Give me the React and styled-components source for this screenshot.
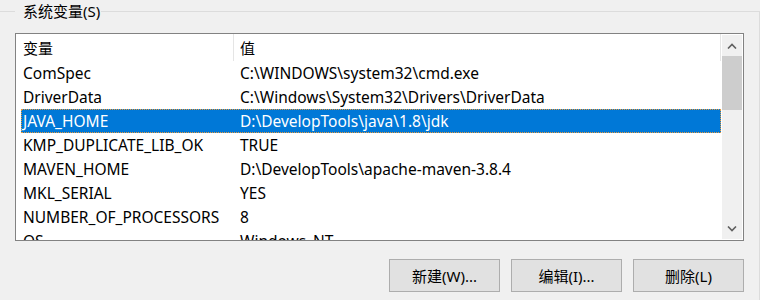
import styled, { createGlobalStyle } from "styled-components";

const GlobalStyle = createGlobalStyle`
  html, body {
    margin: 0;
    padding: 0;
    background: #f0f0f0;
  }
  body {
    font-family: "Noto Sans", "Noto Sans CJK SC", sans-serif;
    font-size: 15px;
    color: #000;
  }
`;

const vars = [
  ["ComSpec", "C:\\WINDOWS\\system32\\cmd.exe"],
  ["DriverData", "C:\\Windows\\System32\\Drivers\\DriverData"],
  ["JAVA_HOME", "D:\\DevelopTools\\java\\1.8\\jdk"],
  ["KMP_DUPLICATE_LIB_OK", "TRUE"],
  ["MAVEN_HOME", "D:\\DevelopTools\\apache-maven-3.8.4"],
  ["MKL_SERIAL", "YES"],
  ["NUMBER_OF_PROCESSORS", "8"],
  ["OS", "Windows_NT"],
];

const Page = styled.div`
  width: 760px;
  height: 300px;
  overflow: hidden;
`;

const Group = styled.fieldset`
  box-sizing: border-box;
  width: 760px;
  height: 311px;
  margin: 0;
  padding: 0 15px;
  border: none;
  border-top: 1px solid #dcdcdc;
  border-right: 1px solid #dcdcdc;
`;

const Legend = styled.legend`
  padding: 0 1px 0 8px;
  line-height: 23px;
  color: #000;
`;

const ListBox = styled.div`
  display: flex;
  height: 206px;
  margin-top: 10px;
  border: 1px solid #828282;
  background: #fff;
`;

const ListArea = styled.div`
  width: 705px;
  overflow: hidden;
  font-size: 15.5px;
`;

const Header = styled.div`
  display: flex;
  height: 27px;
  align-items: center;
  border-right: 1px solid #e5e5e5;
  font-size: 15px;
`;

const HeadCell = styled.div`
  box-sizing: border-box;
  height: 100%;
  display: flex;
  align-items: center;
  padding-left: ${(p) => p.$pad}px;
  width: ${(p) => (p.$w ? `${p.$w}px` : "auto")};
  flex: ${(p) => (p.$w ? "none" : "1")};
  border-right: ${(p) => (p.$w ? "1px solid #e5e5e5" : "none")};
`;

const Row = styled.div`
  box-sizing: border-box;
  display: flex;
  align-items: center;
  height: 24px;
  margin-left: 5px;
  white-space: nowrap;
  background: ${(p) => (p.$selected ? "#0078d7" : "transparent")};
  color: ${(p) => (p.$selected ? "#fff" : "#000")};
  border: 1px dotted ${(p) => (p.$selected ? "#e89a3c" : "transparent")};
`;

const NameCell = styled.div`
  width: 211px;
  padding-left: 1px;
`;

const ValueCell = styled.div`
  padding-left: 6px;
`;

const ScrollBar = styled.div`
  display: flex;
  flex-direction: column;
  width: 20px;
  margin: 1px 0 1px 1px;
  background: #f0f0f0;
`;

const ArrowBtn = styled.div`
  height: 21px;
  display: flex;
  align-items: center;
  justify-content: center;
`;

const Track = styled.div`
  flex: 1;
`;

const Thumb = styled.div`
  height: 54px;
  background: #cdcdcd;
`;

const Buttons = styled.div`
  display: flex;
  justify-content: flex-end;
  gap: 11px;
  margin-top: 18px;
`;

const Button = styled.button`
  box-sizing: border-box;
  width: 111px;
  height: 33px;
  padding: 0;
  border: 1px solid #adadad;
  background: #e1e1e1;
  font-family: inherit;
  font-size: 15px;
  color: #000;
`;

function Chevron({ up }) {
  return (
    <svg width="10" height="6" viewBox="0 0 10 6">
      <polyline
        points={up ? "1,5.5 5,1.5 9,5.5" : "1,0.5 5,4.5 9,0.5"}
        fill="none"
        stroke="#606060"
        strokeWidth="1.6"
      />
    </svg>
  );
}

export default function App() {
  return (
    <Page>
      <GlobalStyle />
      <Group>
        <Legend>系统变量(S)</Legend>
        <ListBox>
          <ListArea>
            <Header>
              <HeadCell $w={218} $pad={7}>变量</HeadCell>
              <HeadCell $pad={6}>值</HeadCell>
            </Header>
            {vars.map(([name, value]) => (
              <Row key={name} $selected={name === "JAVA_HOME"}>
                <NameCell>{name}</NameCell>
                <ValueCell>{value}</ValueCell>
              </Row>
            ))}
          </ListArea>
          <ScrollBar>
            <ArrowBtn><Chevron up /></ArrowBtn>
            <Thumb />
            <Track />
            <ArrowBtn><Chevron /></ArrowBtn>
          </ScrollBar>
        </ListBox>
        <Buttons>
          <Button>新建(W)...</Button>
          <Button>编辑(I)...</Button>
          <Button>删除(L)</Button>
        </Buttons>
      </Group>
    </Page>
  );
}
